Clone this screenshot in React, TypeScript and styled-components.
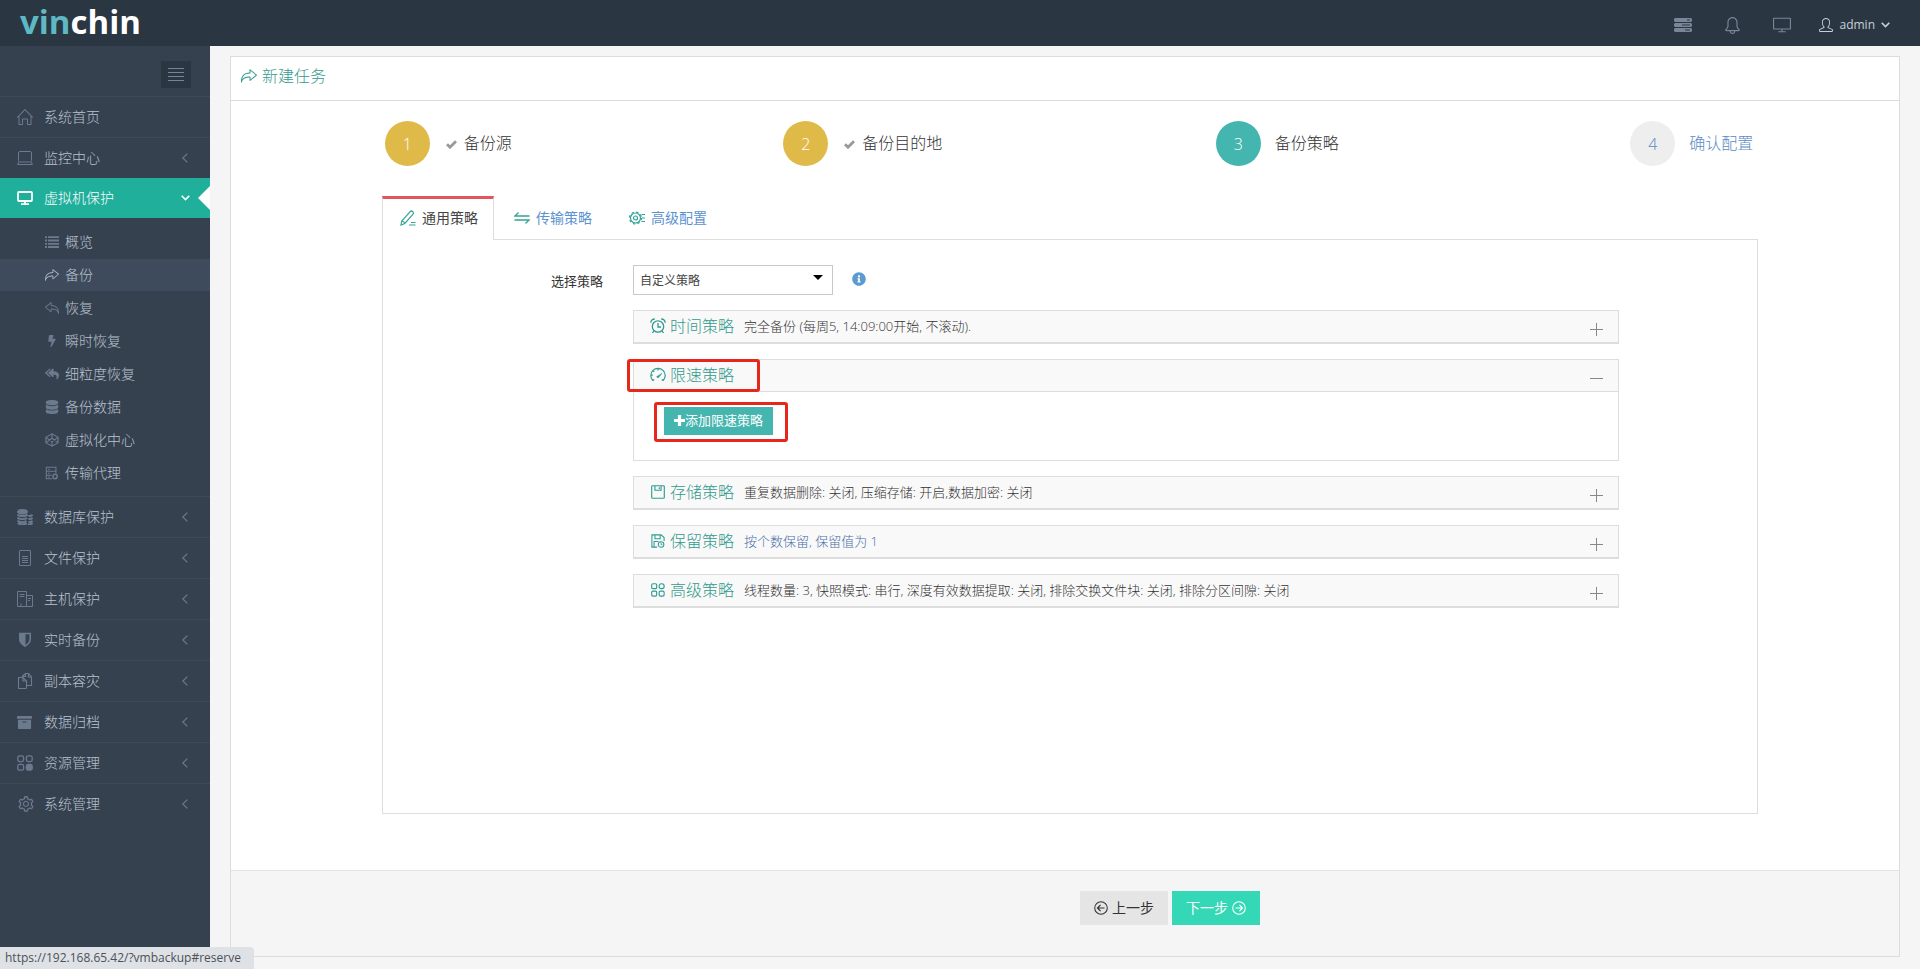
import React, { useState } from 'react';
import styled, { createGlobalStyle, css } from 'styled-components';
import { SlActionRedo, SlActionUndo, SlBell, SlHome, SlScreenDesktop, SlUser } from 'react-icons/sl';
import { FaArchive, FaBolt, FaDatabase, FaInfoCircle, FaReplyAll } from 'react-icons/fa';
import { AiOutlineSetting } from 'react-icons/ai';

const GlobalStyle = createGlobalStyle`
  *, *::before, *::after { box-sizing: border-box; }
  body { margin: 0; background: #f5f5f5; }
  body, button, select { font-family: "Open Sans", "Noto Sans CJK SC", sans-serif; }
  a { text-decoration: none; color: inherit; }
  ul, ol { list-style: none; margin: 0; padding: 0; }
  svg { display: block; flex: none; }
`;

/* ---------- icons ---------- */

type IconProps = { size?: number; children?: React.ReactNode };

const Line = ({ size = 16, children }: IconProps) => (
  <svg width={size} height={size} viewBox="0 0 16 16" fill="none" stroke="currentColor" strokeWidth="1" aria-hidden="true">
    {children}
  </svg>
);

const LaptopIcon = () => (
  <Line>
    <rect x="1.5" y="1.5" width="13" height="10.5" rx="1.5" />
    <path d="M2 12L.5 14.5h15L14 12" />
  </Line>
);
const MonitorIcon = () => (
  <Line>
    <rect x="1" y="2" width="14" height="9" rx="1" strokeWidth="1.8" />
    <path d="M8 11v3M4 14.2h8" strokeWidth="1.8" />
  </Line>
);
const ListIcon = () => (
  <svg width="14" height="12" viewBox="0 0 14 12" fill="none" stroke="currentColor" strokeWidth="1.8" aria-hidden="true">
    <path d="M0 1.200h2M3 1.200h11M0 4.500h2M3 4.500h11M0 7.800h2M3 7.800h11M0 11h2M3 11h11" />
  </svg>
);
const HexIcon = () => (
  <Line size={14}>
    <path d="M8 1l7 4v6l-7 4-7-4V5zM1 5l7 5 7-5M8 10v5M1 11l7-5 7 5M8 1v5" strokeWidth="1.300" />
  </Line>
);
const ProxyIcon = () => (
  <Line size={14}>
    <path d="M8 14.5H1.500v-13h11v7M1.500 6h11M1.500 10.500h6M3.500 3.800h2M3.500 8.200h2M3.500 12.500h2" strokeWidth="1.200" />
    <circle cx="11.500" cy="12" r="2.500" strokeWidth="1.600" />
  </Line>
);
const CoinsIcon = () => (
  <Line>
    <ellipse cx="5.500" cy="2.800" rx="5" ry="2.300" fill="currentColor" />
    <path
      d="M.5 5.500c1 2 9 2 10 0M.5 8.500c1 2 8 2.200 9.500.5M.5 11.500c1 2 7.500 2.200 9 .5M1 14c1 1.600 7 1.800 9 .3M11.500 7c2 .2 3.600-.4 4-1.300M11.500 10c2 .2 3.600-.4 4-1.300M11.500 13c2 .2 3.600-.4 4-1.300M11 15.300c2 .2 4-.2 4.500-1.300"
      strokeWidth="1.900"
    />
  </Line>
);
const DocIcon = () => (
  <Line>
    <rect x="2.500" y=".5" width="11" height="15" rx=".5" />
    <path d="M5 6.500h6M5 8.500h6M5 10.500h6M5 12.500h6" />
  </Line>
);
const HostIcon = () => (
  <Line>
    <path d="M.5.5h9v15h-9zM9.500 4.500h6v11h-6M2.500 3.500h5M2.500 5.500h5M11 7.500h3M11 9.500h2M4 15v-2.500" />
  </Line>
);
const ShieldIcon = () => (
  <Line>
    <path d="M2.800 1.500h10.400v6c0 3-2.500 5-5.200 6.500C5.300 12.500 2.800 10.500 2.800 7.500z" strokeWidth="1.600" />
    <path d="M3 1.500h5V14C5 12.500 3 10.500 3 7.500z" fill="currentColor" />
  </Line>
);
const CopyIcon = () => (
  <Line>
    <path
      d="M9 15.500H1.500V4.500H6L9.500 8v7.500M5.500 4.500V3L8.500.5h3L14.500 4v8.500H9.500M5.500 3.500h3V.5M9.500 8H6V4.500M11.500.5V4h3"
      strokeWidth="1.100"
    />
  </Line>
);
const BlocksIcon = () => (
  <Line>
    <rect x=".8" y=".8" width="5.800" height="5.800" rx="1.800" strokeWidth="1.300" />
    <rect x="9.400" y=".8" width="5.800" height="5.800" rx="1.800" strokeWidth="1.300" />
    <rect x=".8" y="9.400" width="5.800" height="5.800" rx="1.800" strokeWidth="1.300" />
    <rect x="9.400" y="9.400" width="5.800" height="5.800" rx="1.800" strokeWidth="1.300" fill="currentColor" />
  </Line>
);
const ServerIcon = () => (
  <svg width="18" height="14" viewBox="0 0 18 14" fill="currentColor" aria-hidden="true">
    <path
      fillRule="evenodd"
      d="M1 0h16l1 1v2l-1 1H1L0 3V1zM13 1.400v1.200h3V1.400zM1 5h16l1 1v2l-1 1H1L0 8V6zM8 6.400v1.200h8V6.400zM1 10h16l1 1v2l-1 1H1l-1-1v-2zM11 11.400v1.200h5v-1.200z"
    />
  </svg>
);
const MenuIcon = () => (
  <Line>
    <path d="M0 1.500h16M0 5.500h16M0 9.500h16M0 13.500h16" />
  </Line>
);
const ArrowDown = () => (
  <svg width="9" height="6" viewBox="0 0 9 6" fill="none" stroke="currentColor" strokeWidth="1.600" aria-hidden="true">
    <path d="M.7.8l3.800 3.800L8.300.8" />
  </svg>
);
const ArrowLeft = () => (
  <svg width="6" height="10" viewBox="0 0 6 10" fill="none" stroke="currentColor" strokeWidth="1.200" aria-hidden="true">
    <path d="M5.300.6L.8 5l4.500 4.400" />
  </svg>
);
const CheckIcon = () => (
  <svg width="11" height="9" viewBox="0 0 11 9" fill="none" stroke="currentColor" strokeWidth="2.800" aria-hidden="true">
    <path d="M1 4.200l3 3L10 1.200" />
  </svg>
);
const PlusIcon = () => (
  <svg width="11" height="11" viewBox="0 0 11 11" fill="none" stroke="currentColor" strokeWidth="3.200" aria-hidden="true">
    <path d="M0 5.500h11M5.500 0v11" />
  </svg>
);
const PencilIcon = () => (
  <Line>
    <path d="M1 15l.8-4L10 1.800c.8-.9 2-.9 2.800-.2s.8 1.900 0 2.800L4.800 13.500zM1.800 11c1.500.2 2.700 1.200 3 2.500M9 15h6.500M11 12.500h4.500" strokeWidth="1.200" />
  </Line>
);
const TransferIcon = () => (
  <Line>
    <path d="M4.500 2.500L1 6h14.500M11.500 13.500L15 10H.5" strokeWidth="1.300" />
  </Line>
);
const GearListIcon = () => (
  <Line>
    <circle cx="6.500" cy="8" r="5" strokeWidth="1.200" />
    <circle cx="6.500" cy="8" r="2" strokeWidth="1.200" />
    <circle cx="6.500" cy="8" r="6" strokeDasharray="2.350 2.350" strokeWidth="1.200" />
    <path d="M12.500 4.500H16M13 8h3M12.500 11.500H16" strokeWidth="1.200" />
  </Line>
);
const AlarmIcon = () => (
  <Line>
    <circle cx="8" cy="8.500" r="5.700" strokeWidth="1.300" />
    <path d="M8 5v4h3M.8 4.800C.8 2.500 2.500 1 4.800 1M15.200 4.800c0-2.300-1.700-3.800-4-3.800M3.800 13L2.500 15M12.200 13l1.300 2" strokeWidth="1.300" />
  </Line>
);
const GaugeIcon = () => (
  <Line>
    <path d="M2.800 13.500A7.200 7.200 0 1 1 13.200 13.500M2.800 13.500l1.400-1M13.200 13.500l-1.400-1M8 1.500v2M1 8.200h1.800M3 3.600l1.300 1.300" strokeWidth="1.200" />
    <path d="M6.500 9.800L12 6.300 8.200 11z" fill="currentColor" strokeWidth=".5" />
  </Line>
);
const DiskIcon = () => (
  <Line size={14}>
    <path d="M.8 1.800q0-1 1-1h12.400q1 0 1 1v12.400q0 1-1 1H1.800q-1 0-1-1zM4.500 1v5h7V1M9.500 2.500v2" strokeWidth="1.300" />
  </Line>
);
const DiskClockIcon = () => (
  <Line size={14}>
    <path d="M7 15H1V1h10.500L15 4v4M4.500 1v4.500h6V1M3.500 15V8.500h5" strokeWidth="1.200" />
    <circle cx="11.500" cy="12" r="3.200" strokeWidth="1.200" />
    <path d="M11.500 10v2.200H13" />
  </Line>
);
const TilesIcon = () => (
  <Line size={14}>
    <rect x=".8" y=".8" width="5.700" height="5.700" rx="1.500" strokeWidth="1.300" />
    <rect x="9.300" y=".8" width="5.700" height="5.700" rx="2.500" strokeWidth="1.300" />
    <rect x=".8" y="9.300" width="5.700" height="5.700" rx="1.500" strokeWidth="1.300" />
    <rect x="9.300" y="9.300" width="5.700" height="5.700" rx="1.500" strokeWidth="1.300" />
  </Line>
);
const CircleArrow = ({ back }: { back?: boolean }) => (
  <Line size={14}>
    <circle cx="8" cy="8" r="7.200" strokeWidth="1.200" />
    <path d={back ? 'M12 8H4M7.500 4.500L4 8l3.500 3.500' : 'M4 8h8M8.500 4.500L12 8l-3.500 3.500'} strokeWidth="1.400" />
  </Line>
);

/* ---------- top bar ---------- */

const TopBar = styled.header`
  display: flex;
  align-items: center;
  justify-content: space-between;
  height: 46px;
  padding: 0 30px 0 20px;
  background: #2b3643;
`;
const Logo = styled.a`
  font-size: 33px;
  line-height: 46px;
  font-weight: 700;
  color: #fff;
  padding-bottom: 2px;
  span { color: #5eb9c4; }
`;
const TopNav = styled.nav`
  display: flex;
  align-items: center;
  gap: 32px;
  padding-top: 4px;
`;
const TopButton = styled.button`
  display: flex;
  align-items: center;
  padding: 0;
  border: 0;
  background: none;
  color: #79869a;
`;
const UserButton = styled(TopButton)`
  gap: 6px;
  margin-left: -4px;
  color: #c6cfda;
  font-size: 12px;
  line-height: 18px;
`;

/* ---------- side menu ---------- */

const Shell = styled.div`
  display: flex;
  min-height: calc(100vh - 46px);
`;
const SideBar = styled.nav`
  flex: none;
  width: 210px;
  background: #364150;
  color: #bac3cf;
  font-size: 14px;
  font-weight: 300;
`;
const TogglerRow = styled.div`
  display: flex;
  justify-content: flex-end;
  padding: 15px 19px 8px 0;
`;
const Toggler = styled.button`
  display: grid;
  place-items: center;
  width: 30px;
  height: 27px;
  padding: 0;
  border: 0;
  background: #2b3643;
  color: #76839a;
`;
const MenuEntry = styled.li`
  border-top: 1px solid #3d4957;
`;
const MenuLink = styled.a<{ $active?: boolean }>`
  position: relative;
  display: grid;
  grid-template-columns: 16px 1fr auto;
  align-items: center;
  gap: 11px;
  height: 40px;
  padding: 0 22px 0 17px;
  line-height: 20px;
  svg { color: #6b7a8d; }
  ${({ $active }) =>
    $active &&
    css`
      padding-right: 20px;
      background: #1faf9b;
      color: #fff;
      svg { color: #fff; }
      &::after {
        content: "";
        position: absolute;
        right: 0;
        top: 8px;
        border: 12px solid transparent;
        border-left: 0;
        border-right-color: #fff;
      }
    `}
`;
const SubMenu = styled.ul`
  display: grid;
  gap: 1px;
  padding: 8px 0 7px;
`;
const SubLink = styled.a<{ $active?: boolean }>`
  display: flex;
  align-items: center;
  gap: 6px;
  height: 32px;
  padding: 0 0 1px 45px;
  line-height: 20px;
  background: ${({ $active }) => ($active ? '#3e4b5c' : 'none')};
  svg { width: 14px; color: ${({ $active }) => ($active ? '#a7b1bf' : '#6b7a8d')}; }
`;

/* ---------- task panel ---------- */

const Main = styled.main`
  display: flex;
  flex: 1;
  min-width: 0;
  padding: 10px 20px 12px;
`;
const Portlet = styled.section`
  display: flex;
  flex-direction: column;
  flex: 1;
  min-width: 0;
  border: 1px solid #dcdcdc;
  background: #fff;
`;
const PortletTitle = styled.h1`
  display: flex;
  align-items: center;
  gap: 5px;
  height: 44px;
  margin: 0;
  padding: 0 10px 5px;
  border-bottom: 1px solid #dcdcdc;
  color: #35998d;
  font-size: 16px;
  line-height: 24px;
  font-weight: 300;
`;
const PortletBody = styled.div`
  flex: 1;
  padding-bottom: 55px;
`;
const Steps = styled.ol`
  display: grid;
  grid-template-columns: repeat(4, 1fr);
  padding: 20px 0 30px 10px;
`;
type StepState = 'done' | 'current' | 'todo';
const Step = styled.li<{ $state: StepState }>`
  display: flex;
  justify-content: center;
  align-items: center;
  gap: ${({ $state }) => ($state === 'done' ? 16 : 14)}px;
  color: ${({ $state }) => ($state === 'todo' ? '#5b8cc4' : '#333')};
  font-size: 16px;
  line-height: 24px;
  font-weight: 300;
`;
const stepFill = { done: '#dfba49', current: '#45b6af', todo: '#eee' };
const StepNumber = styled.span<{ $state: StepState }>`
  display: grid;
  place-items: center;
  width: 45px;
  height: 45px;
  border-radius: 50%;
  background: ${({ $state }) => stepFill[$state]};
  color: ${({ $state }) => ($state === 'todo' ? '#5b8cc4' : '#fff')};
`;
const StepLabel = styled.span`
  display: flex;
  align-items: center;
  gap: 7px;
  padding-bottom: 1px;
  svg { color: #999; margin-top: 3px; }
`;
const TabArea = styled.div`
  margin: 0 141px 0 151px;
`;
const TabList = styled.div`
  display: flex;
  position: relative;
  z-index: 1;
  margin-bottom: -1px;
`;
const Tab = styled.button<{ $active?: boolean }>`
  display: flex;
  align-items: center;
  gap: 6px;
  height: 44px;
  padding: 0 15px 3px 17px;
  border: 0 solid #ddd;
  border-width: 0 1px;
  border-color: transparent;
  border-top: 3px solid transparent;
  background: none;
  color: #5b92cf;
  font-size: 14px;
  line-height: 20px;
  svg { color: #35a397; }
  & + & { padding: 0 16px 3px 19px; }
  ${({ $active }) =>
    $active &&
    css`
      border-color: #e0565c #ddd;
      background: #fff;
      color: #444;
    `}
`;
const TabPane = styled.div`
  min-height: 575px;
  padding: 25px 138px 25px 136px;
  border: 1px solid #ddd;
`;
const FormRow = styled.div`
  display: grid;
  grid-template-columns: 84px 200px auto;
  justify-content: start;
  gap: 0 30px;
`;
const FieldLabel = styled.label`
  padding: 6px 0 0 32px;
  color: #333;
  font-size: 13px;
  line-height: 20px;
  white-space: nowrap;
`;
const SelectWrap = styled.div`
  position: relative;
  svg { position: absolute; right: 10px; top: 10px; pointer-events: none; }
`;
const Select = styled.select`
  appearance: none;
  width: 100%;
  height: 30px;
  padding: 1px 6px 0;
  border: 1px solid #c8c8c8;
  border-radius: 0;
  background: #fff;
  color: #444;
  font-size: 12px;
`;
const Info = styled.span`
  margin: 7px 0 0 -11px;
  color: #5b9bd1;
`;
const PanelStack = styled.div`
  display: grid;
  gap: 15px;
  margin: 15px 0 0 114px;
`;
const Panel = styled.section`
  position: relative;
  border: 1px solid #ddd;
`;
const PanelHeading = styled.button`
  display: flex;
  align-items: center;
  width: 100%;
  height: 32px;
  padding: 0 15px 2px 16px;
  border: 0;
  border-bottom: 1px solid #ddd;
  background: #f9f9f9;
  text-align: left;
  font-weight: 300;
`;
const PanelIcon = styled.span`
  display: grid;
  place-items: center;
  width: 16px;
  color: #2f9c90;
`;
const PanelName = styled.span`
  margin: 0 10px 0 4px;
  color: #35998d;
  font-size: 16px;
  line-height: 24px;
`;
const PanelNote = styled.span<{ $blue?: boolean }>`
  flex: 1;
  color: ${({ $blue }) => ($blue ? '#4a6ea8' : '#333')};
  font-size: 13px;
  line-height: 20px;
`;
const Sign = styled.span`
  padding-top: 7px;
  color: #888;
`;
const PanelBody = styled.div`
  min-height: 68px;
  padding: 15px 30px;
`;
const AddButton = styled.button`
  display: flex;
  align-items: center;
  height: 28px;
  padding: 0 10px 2px;
  border: 0;
  background: #45b6af;
  color: #fff;
  font-size: 13px;
  line-height: 20px;
`;
const Marker = styled.span<{ $target: 'heading' | 'button' }>`
  position: absolute;
  border: 3px solid #e8271c;
  border-radius: 3px;
  pointer-events: none;
  ${({ $target }) =>
    $target === 'heading'
      ? css`left: -7px; top: -1px; width: 133px; height: 33px;`
      : css`left: 20px; top: 42px; width: 134px; height: 40px;`}
`;
const Actions = styled.footer`
  display: flex;
  gap: 4px;
  padding: 20px 0 31px calc(50% + 15px);
  border-top: 1px solid #e3e3e3;
  background: #f5f5f5;
`;
const StepButton = styled.button<{ $primary?: boolean }>`
  display: flex;
  align-items: center;
  justify-content: center;
  gap: 4px;
  width: 88px;
  height: 34px;
  padding: 0;
  border: 0;
  background: ${({ $primary }) => ($primary ? '#35d8b6' : '#e5e5e5')};
  color: ${({ $primary }) => ($primary ? '#fff' : '#333')};
  font-size: 14px;
  line-height: 20px;
`;
const StatusBubble = styled.div`
  position: fixed;
  left: 0;
  bottom: 0;
  height: 22px;
  padding: 0 13px 0 5px;
  border-radius: 0 4px 0 0;
  background: #dee1e6;
  color: #4d5156;
  font-size: 12px;
  line-height: 22px;
`;

/* ---------- data ---------- */

const overview = [{ label: '系统首页', icon: <SlHome size={16} />, leaf: true }, { label: '监控中心', icon: <LaptopIcon /> }];
const protections = [
  { label: '数据库保护', icon: <CoinsIcon /> },
  { label: '文件保护', icon: <DocIcon /> },
  { label: '主机保护', icon: <HostIcon /> },
  { label: '实时备份', icon: <ShieldIcon /> },
  { label: '副本容灾', icon: <CopyIcon /> },
  { label: '数据归档', icon: <FaArchive size={15} /> },
  { label: '资源管理', icon: <BlocksIcon /> },
  { label: '系统管理', icon: <AiOutlineSetting size={18} /> },
];
const vmItems = [
  { label: '概览', icon: <ListIcon /> },
  { label: '备份', icon: <SlActionRedo size={14} />, active: true },
  { label: '恢复', icon: <SlActionUndo size={14} /> },
  { label: '瞬时恢复', icon: <FaBolt size={12} /> },
  { label: '细粒度恢复', icon: <FaReplyAll size={14} /> },
  { label: '备份数据', icon: <FaDatabase size={14} /> },
  { label: '虚拟化中心', icon: <HexIcon /> },
  { label: '传输代理', icon: <ProxyIcon /> },
];
const steps: { label: string; state: StepState }[] = [
  { label: '备份源', state: 'done' },
  { label: '备份目的地', state: 'done' },
  { label: '备份策略', state: 'current' },
  { label: '确认配置', state: 'todo' },
];
const tabs = [
  { label: '通用策略', icon: <PencilIcon /> },
  { label: '传输策略', icon: <TransferIcon /> },
  { label: '高级配置', icon: <GearListIcon /> },
];
const panels = [
  { name: '时间策略', icon: <AlarmIcon />, note: '完全备份 (每周5, 14:09:00开始, 不滚动).' },
  { name: '限速策略', icon: <GaugeIcon />, note: '', body: true },
  { name: '存储策略', icon: <DiskIcon />, note: '重复数据删除: 关闭, 压缩存储: 开启,数据加密: 关闭' },
  { name: '保留策略', icon: <DiskClockIcon />, note: '按个数保留, 保留值为 1', blue: true },
  {
    name: '高级策略',
    icon: <TilesIcon />,
    note: '线程数量: 3, 快照模式: 串行, 深度有效数据提取: 关闭, 排除交换文件块: 关闭, 排除分区间隙: 关闭',
  },
];

const MenuRow = ({ label, icon, leaf }: { label: string; icon: React.ReactNode; leaf?: boolean }) => (
  <MenuEntry>
    <MenuLink href="#">
      {icon}
      <span>{label}</span>
      {!leaf && <ArrowLeft />}
    </MenuLink>
  </MenuEntry>
);

export default function App() {
  const [tab, setTab] = useState(0);
  return (
    <>
      <GlobalStyle />
      <TopBar>
        <Logo href="#"><span>vin</span>chin</Logo>
        <TopNav>
          <TopButton aria-label="任务"><ServerIcon /></TopButton>
          <TopButton aria-label="通知"><SlBell size={17} /></TopButton>
          <TopButton aria-label="大屏"><SlScreenDesktop size={18} /></TopButton>
          <UserButton>
            <SlUser size={14} />
            <span>admin</span>
            <ArrowDown />
          </UserButton>
        </TopNav>
      </TopBar>
      <Shell>
        <SideBar>
          <TogglerRow>
            <Toggler aria-label="菜单"><MenuIcon /></Toggler>
          </TogglerRow>
          <ul>
            {overview.map((m) => <MenuRow key={m.label} {...m} />)}
            <li>
              <MenuLink href="#" $active>
                <MonitorIcon />
                <span>虚拟机保护</span>
                <ArrowDown />
              </MenuLink>
              <SubMenu>
                {vmItems.map((s) => (
                  <li key={s.label}>
                    <SubLink href="#" $active={s.active}>
                      {s.icon}
                      {s.label}
                    </SubLink>
                  </li>
                ))}
              </SubMenu>
            </li>
            {protections.map((m) => <MenuRow key={m.label} {...m} />)}
          </ul>
        </SideBar>
        <Main>
          <Portlet>
            <PortletTitle>
              <SlActionRedo size={16} />
              新建任务
            </PortletTitle>
            <PortletBody>
              <Steps>
                {steps.map((s, i) => (
                  <Step key={s.label} $state={s.state}>
                    <StepNumber $state={s.state}>{i + 1}</StepNumber>
                    <StepLabel>
                      {s.state === 'done' && <CheckIcon />}
                      {s.label}
                    </StepLabel>
                  </Step>
                ))}
              </Steps>
              <TabArea>
                <TabList role="tablist">
                  {tabs.map((t, i) => (
                    <Tab key={t.label} role="tab" aria-selected={i === tab} $active={i === tab} onClick={() => setTab(i)}>
                      {t.icon}
                      {t.label}
                    </Tab>
                  ))}
                </TabList>
                <TabPane role="tabpanel">
                  <FormRow>
                    <FieldLabel htmlFor="policy">选择策略</FieldLabel>
                    <SelectWrap>
                      <Select id="policy" defaultValue="custom">
                        <option value="custom">自定义策略</option>
                      </Select>
                      <svg width="10" height="5" viewBox="0 0 10 5" aria-hidden="true"><path d="M0 0h10L5 5z" /></svg>
                    </SelectWrap>
                    <Info><FaInfoCircle size={14} /></Info>
                  </FormRow>
                  <PanelStack>
                    {panels.map((p) => (
                      <Panel key={p.name}>
                        <PanelHeading aria-expanded={!!p.body}>
                          <PanelIcon>{p.icon}</PanelIcon>
                          <PanelName>{p.name}</PanelName>
                          <PanelNote $blue={p.blue}>{p.note}</PanelNote>
                          <Sign>
                            <svg width="13" height="13" viewBox="0 0 13 13" stroke="currentColor" aria-hidden="true">
                              <path d={p.body ? 'M0 6.500h13' : 'M0 6.500h13M6.500 0v13'} />
                            </svg>
                          </Sign>
                        </PanelHeading>
                        {p.body && (
                          <>
                            <PanelBody>
                              <AddButton><PlusIcon />添加限速策略</AddButton>
                            </PanelBody>
                            <Marker $target="heading" />
                            <Marker $target="button" />
                          </>
                        )}
                      </Panel>
                    ))}
                  </PanelStack>
                </TabPane>
              </TabArea>
            </PortletBody>
            <Actions>
              <StepButton><CircleArrow back />上一步</StepButton>
              <StepButton $primary>下一步<CircleArrow /></StepButton>
            </Actions>
          </Portlet>
        </Main>
      </Shell>
      <StatusBubble>https://192.168.65.42/?vmbackup#reserve</StatusBubble>
    </>
  );
}
